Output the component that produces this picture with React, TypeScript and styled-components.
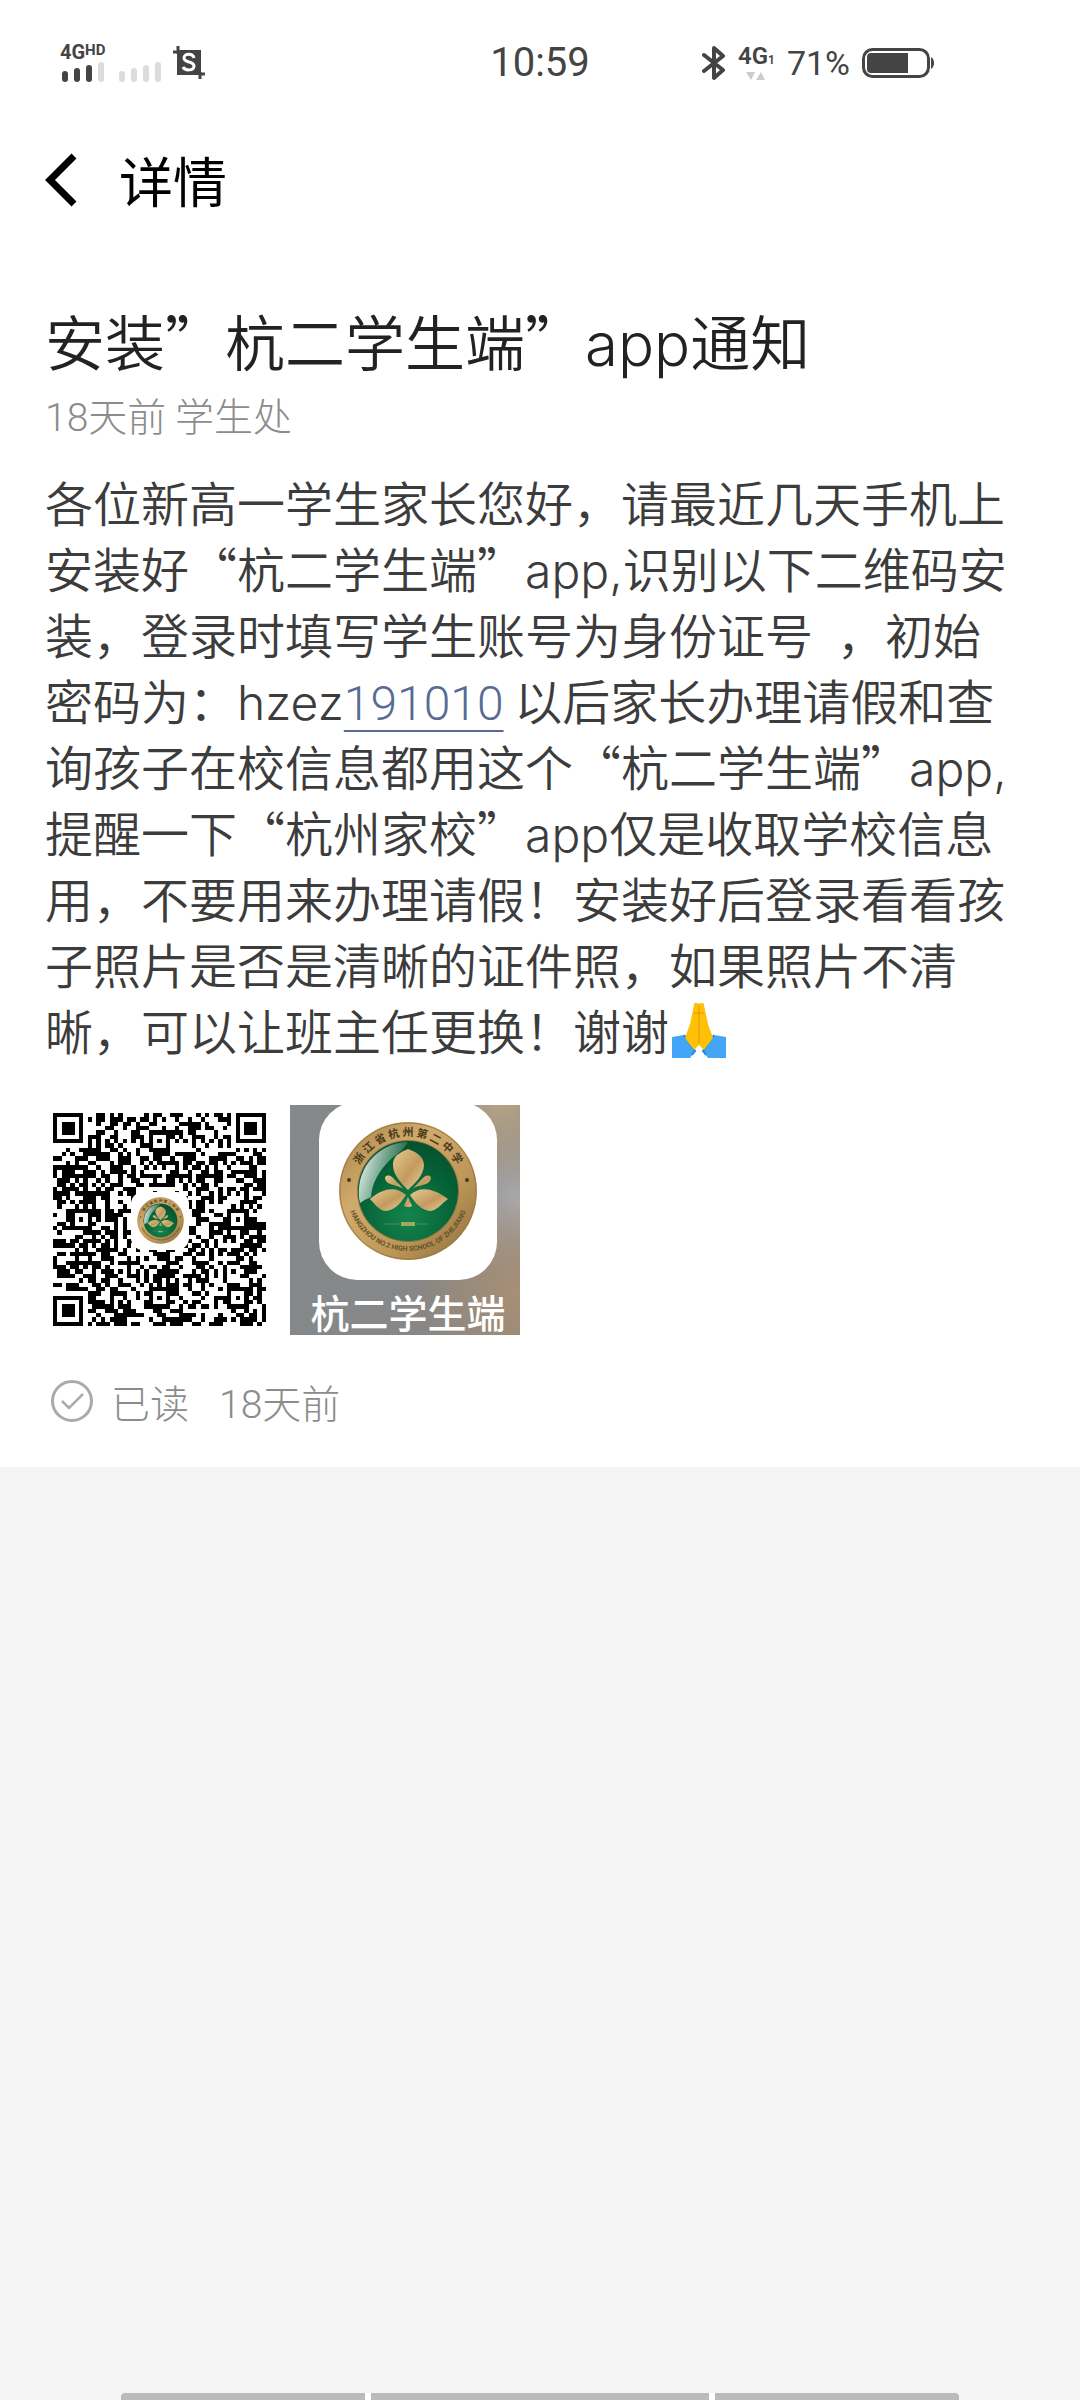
import React from 'react';
import styled, { createGlobalStyle } from 'styled-components';

const cjk = '"Noto Sans CJK SC", "Noto Sans", sans-serif';
const latin = 'Roboto, "Noto Sans", sans-serif';

const GlobalStyle = createGlobalStyle`
  * { box-sizing: border-box; }
  body { margin: 0; background: #f5f5f5; font-family: ${cjk}; }
  h1, h2, p { margin: 0; }
`;

const Page = styled.div`
  display: flex;
  flex-direction: column;
  min-height: 100vh;
`;

const Sheet = styled.div`
  background: #fff;
  padding-bottom: 36px;
`;

const StatusBar = styled.div`
  display: grid;
  grid-template-columns: 1fr auto 1fr;
  align-items: center;
  height: 126px;
  padding: 0 146px 0 60px;
  color: #444;
  font-family: ${latin};
`;

const StatusGroup = styled.div<{ $end?: boolean }>`
  display: flex;
  align-items: center;
  gap: 12px;
  justify-content: ${(p) => (p.$end ? 'flex-end' : 'flex-start')};
`;

const Carrier = styled.div`
  display: flex;
  flex-direction: column;
  gap: 2px;
`;

const CarrierName = styled.div`
  display: flex;
  align-items: flex-start;
  font-size: 20px;
  line-height: 16px;
  font-weight: 700;
`;

const Small = styled.span`
  font-size: 15px;
  line-height: 12px;
`;

const Bars = styled.div`
  display: flex;
  align-items: flex-end;
  gap: 6px;
  height: 20px;
  padding-left: 2px;
`;

const Bar = styled.i<{ $h: number; $on?: boolean }>`
  width: 6px;
  height: ${(p) => p.$h}px;
  border-radius: 3px;
  background: ${(p) => (p.$on ? '#444' : '#dcdcdc')};
`;

const SecondSim = styled.div`
  align-self: flex-end;
`;

const Clock = styled.time`
  font-size: 40px;
  line-height: 48px;
  padding-left: 86px;
`;

const Network = styled.div`
  display: flex;
  flex-direction: column;
  align-items: center;
  font-size: 24px;
  line-height: 22px;
  font-weight: 600;
`;

const Tiny = styled.span`
  font-size: 12px;
`;

const Percent = styled.span`
  font-size: 34px;
  line-height: 40px;
`;

const Header = styled.header`
  display: flex;
  align-items: center;
  gap: 42px;
  height: 108px;
  padding: 0 45px;
`;

const BackButton = styled.button`
  display: flex;
  padding: 0;
  border: 0;
  background: none;
  color: #000;
`;

const HeaderTitle = styled.h1`
  font-size: 54px;
  line-height: 72px;
  font-weight: 400;
  color: #000;
`;

const Notice = styled.article`
  padding: 64px 60px 0 45px;
`;

const Title = styled.h2`
  font-size: 60px;
  line-height: 84px;
  font-weight: 350;
  color: #222;
`;

const Meta = styled.p`
  padding-top: 2px;
  font-size: 39px;
  line-height: 60px;
  font-weight: 300;
  color: #8c8c8c;
`;

const Body = styled.p`
  padding-top: 24px;
  font-size: 48px;
  line-height: 66px;
  font-weight: 350;
  color: #3c3c3c;
`;

const Latin = styled.span`
  font-family: Inter, "Noto Sans", sans-serif;
  font-weight: 300;
  line-height: 1;
`;

const Digits = styled.span`
  font-family: ${latin};
  font-weight: 300;
  line-height: 1;
`;

const NumberLink = styled.a`
  font-family: ${latin};
  font-weight: 300;
  line-height: 1;
  color: #576b95;
  text-decoration: underline;
  text-decoration-thickness: 2px;
  text-underline-offset: 10px;
`;

const Pray = styled.svg`
  width: 54px;
  height: 56px;
  margin-left: 3px;
  vertical-align: -8px;
`;

const Attachments = styled.div`
  display: flex;
  gap: 15px;
  padding-top: 43px;
`;

const Attachment = styled.button`
  display: flex;
  flex-direction: column;
  align-items: center;
  width: 230px;
  height: 230px;
  padding: 0;
  border: 0;
  background: #fff;
  overflow: hidden;
`;

const AppShot = styled(Attachment)`
  justify-content: flex-start;
  padding-left: 6px;
  background:
    radial-gradient(circle at 100% 82%, #a88f74 0, rgba(168, 143, 116, 0) 34%),
    radial-gradient(circle at 92% 0, #b5a285 0, rgba(181, 162, 133, 0) 26%),
    radial-gradient(circle at 100% 42%, #a9a9ad 0, rgba(169, 169, 173, 0) 30%),
    linear-gradient(100deg, #86898a 0%, #858789 45%, #8d8780 100%);
`;

const AppTile = styled.span`
  display: flex;
  align-items: center;
  justify-content: center;
  flex: none;
  width: 178px;
  height: 178px;
  margin-top: -3px;
  border-radius: 38px;
  background: #fff;
`;

const AppLabel = styled.span`
  flex: none;
  padding-top: 7px;
  font-family: ${cjk};
  font-size: 39px;
  line-height: 48px;
  font-weight: 500;
  color: #fff;
`;

const ReadRow = styled.div`
  display: flex;
  align-items: center;
  gap: 18px;
  padding: 36px 0 0 6px;
  font-size: 39px;
  line-height: 60px;
  font-weight: 300;
  color: #8c8c8c;
`;

const ReadTime = styled.time`
  padding-left: 12px;
`;

const NavHandles = styled.nav`
  display: grid;
  grid-template-columns: 244fr 338fr 244fr;
  gap: 6px;
  margin: auto 121px 0;
  height: 7px;
  border-radius: 4px 4px 0 0;
  overflow: hidden;
  background: #fff;
`;

const Handle = styled.span`
  background: #bababa;
`;

const SIZE = 49;

function finder(x: number, y: number, ox: number, oy: number): boolean | null {
  const dx = x - ox;
  const dy = y - oy;
  if (dx < -1 || dy < -1 || dx > 7 || dy > 7) return null;
  const r = Math.max(Math.abs(dx - 3), Math.abs(dy - 3));
  return r === 3 || r <= 1;
}

function moduleOn(x: number, y: number, noise: () => number): boolean {
  const value = noise() > 0.49;
  for (const [ox, oy] of [[0, 0], [SIZE - 7, 0], [0, SIZE - 7]]) {
    const hit = finder(x, y, ox, oy);
    if (hit !== null) return hit;
  }
  for (const [cx, cy] of [[24, 6], [6, 24], [24, 42], [42, 24], [42, 42]]) {
    const r = Math.max(Math.abs(x - cx), Math.abs(y - cy));
    if (r <= 2) return r !== 1;
  }
  if (x === 6) return y % 2 === 0;
  if (y === 6) return x % 2 === 0;
  return value;
}

function qrPath(): string {
  let seed = 191010;
  const noise = () => {
    seed = (seed * 1103515245 + 12345) % 2147483648;
    return seed / 2147483648;
  };
  let d = '';
  for (let y = 0; y < SIZE; y++) {
    for (let x = 0; x < SIZE; x++) {
      if (moduleOn(x, y, noise)) d += `M${x} ${y}h1v1h-1z`;
    }
  }
  return d;
}

const QR = qrPath();

function Emblem({ id, x, y, size }: { id: string; x?: number; y?: number; size: number }) {
  return (
    <svg x={x} y={y} width={size} height={size} viewBox="-70 -70 140 140" aria-hidden="true">
      <defs>
        <linearGradient id={`${id}-gold`} x1="0" y1="0" x2="1" y2="1">
          <stop offset="0" stopColor="#a88348" />
          <stop offset="0.35" stopColor="#d0ab6c" />
          <stop offset="0.65" stopColor="#bd9858" />
          <stop offset="1" stopColor="#8b6c3c" />
        </linearGradient>
        <radialGradient id={`${id}-green`} cx="0.5" cy="0.75" r="0.75">
          <stop offset="0" stopColor="#14854c" />
          <stop offset="0.6" stopColor="#066438" />
          <stop offset="1" stopColor="#05512f" />
        </radialGradient>
        <linearGradient id={`${id}-shine`} x1="0" y1="0.3" x2="1" y2="0.7">
          <stop offset="0" stopColor="#fff" stopOpacity="0.95" />
          <stop offset="0.8" stopColor="#cfe6da" stopOpacity="0.15" />
        </linearGradient>
        <linearGradient id={`${id}-petal`} x1="0" y1="0" x2="1" y2="1">
          <stop offset="0" stopColor="#e6cb92" />
          <stop offset="0.55" stopColor="#c39a5e" />
          <stop offset="1" stopColor="#ead39b" />
        </linearGradient>
        <path id={`${id}-top`} d="M-55 0A55 55 0 0 1 55 0" />
        <path id={`${id}-bottom`} d="M-62 -2A62 62 0 1 0 62 -2" />
      </defs>
      <circle r="69" fill={`url(#${id}-gold)`} />
      <circle r="68" fill="none" stroke="#9c7a44" strokeWidth="1" />
      <circle r="51" fill="#8c7440" />
      <circle r="50" fill={`url(#${id}-green)`} />
      <path d="M-48 12A50 50 0 0 1 0 -49Q-4 -41 -16 -33Q-36 -14 -37 6Q-42 8 -48 12Z" fill={`url(#${id}-shine)`} />
      <g fill={`url(#${id}-petal)`}>
        <path d="M0 -1C-7 -8 -16 -17 -15 -28C-14 -36 -7 -39 0 -42C8 -39 16 -35 16 -25C15 -15 7 -8 0 -1Z" />
        <path d="M-2 4C-12 -5 -25 -3 -38 8C-33 13 -30 19 -22 20C-12 19 -7 11 -2 4Z" />
        <path d="M2 4C12 -5 25 -3 40 8C33 13 30 19 22 20C12 19 7 11 2 4Z" />
        <path d="M-3 0C-7 -6 -12 -4 -20 -8C-26 -13 -22 -18 -16 -14C-12 -10 -8 -6 -3 0Z" />
        <path d="M3 0C7 -6 12 -4 20 -8C26 -13 22 -18 16 -14C12 -10 8 -6 3 0Z" />
        <path d="M0 6L-4 15Q0 17 4 15Z" />
      </g>
      <path d="M-24 33H-9M9 33H20" stroke="#4a8f55" />
      <path d="M-7 33H7" stroke="#a5a860" strokeWidth="4" />
      <circle cx="-59" cy="-11" r="2" fill="#4a3a1c" />
      <circle cx="59" cy="-11" r="2" fill="#4a3a1c" />
      <text fontFamily={cjk} fontSize="11" fontWeight="700" fill="#4a3a1c" textAnchor="middle">
        <textPath href={`#${id}-top`} startOffset="50%">浙 江 省 杭 州 第 二 中 学</textPath>
      </text>
      <text fontFamily={latin} fontSize="7" fontWeight="700" fill="#65512a" textAnchor="middle">
        <textPath href={`#${id}-bottom`} startOffset="50%">HANGZHOU NO.2 HIGH SCHOOL OF ZHEJIANG</textPath>
      </text>
    </svg>
  );
}

export default function App() {
  return (
    <Page lang="zh-CN">
      <GlobalStyle />
      <Sheet>
        <StatusBar>
          <StatusGroup>
            <Carrier>
              <CarrierName>4G<Small>HD</Small></CarrierName>
              <Bars><Bar $h={11} $on /><Bar $h={14} $on /><Bar $h={17} $on /><Bar $h={20} /></Bars>
            </Carrier>
            <SecondSim>
              <Bars><Bar $h={11} /><Bar $h={14} /><Bar $h={17} /><Bar $h={20} /></Bars>
            </SecondSim>
            <svg width="34" height="34" viewBox="0 0 34 34" aria-hidden="true">
              <path d="M4 4H28V29H4Z" fill="#444" />
              <path d="M0 6H6M5 0V8M26 28H32M27 26V33" stroke="#444" strokeWidth="3" />
              <path d="M21 12C20 7 11 7 11 12C11 17 21 15 21 20C21 25 12 25 10 21" fill="none" stroke="#fff" strokeWidth="3" />
            </svg>
          </StatusGroup>
          <Clock>10:59</Clock>
          <StatusGroup $end>
            <svg width="24" height="36" viewBox="0 0 24 36" fill="none" stroke="#444" strokeWidth="4" strokeLinejoin="round" strokeLinecap="round" aria-hidden="true">
              <path d="M2 10L21 25L12 33V3L21 11L2 26" />
            </svg>
            <Network>
              <span>4G<Tiny>1</Tiny></span>
              <svg width="20" height="10" viewBox="0 0 20 10" fill="#ccc" aria-hidden="true">
                <path d="M0 1H9L5 9ZM10 9H19L15 1Z" />
              </svg>
            </Network>
            <Percent>71%</Percent>
            <svg width="72" height="30" viewBox="0 0 72 30" aria-hidden="true">
              <rect x="1.500" y="1.500" width="65" height="27" rx="9" fill="none" stroke="#444" strokeWidth="3" />
              <path d="M9 5H46V25H9Q5 25 5 21V9Q5 5 9 5Z" fill="#444" />
              <path d="M69 9Q72 11 72 15Q72 19 69 21Z" fill="#444" />
            </svg>
          </StatusGroup>
        </StatusBar>
        <Header>
          <BackButton type="button" aria-label="返回">
            <svg width="32" height="54" viewBox="0 0 32 54" fill="none" stroke="#000" strokeWidth="7" aria-hidden="true">
              <path d="M29 3L5 27L29 51" />
            </svg>
          </BackButton>
          <HeaderTitle>详情</HeaderTitle>
        </Header>
        <Notice>
          <Title>安装”杭二学生端”<Latin>app</Latin>通知</Title>
          <Meta><Digits>18</Digits>天前 学生处</Meta>
          <Body>
            各位新高一学生家长您好，请最近几天手机上安装好“杭二学生端”<Latin>app,</Latin>识别以下二维码安装，登录时填写学生账号为身份证号&ensp;，初始密码为：<Latin>hzez</Latin><NumberLink href="tel:191010">191010</NumberLink> 以后家长办理请假和查询孩子在校信息都用这个“杭二学生端”<Latin>app,</Latin>提醒一下“杭州家校”<Latin>app</Latin>仅是收取学校信息用，不要用来办理请假！安装好后登录看看孩子照片是否是清晰的证件照，如果照片不清晰，可以让班主任更换！谢谢<Pray viewBox="0 0 54 56" role="img" aria-label="🙏">
              <path d="M0 35L12 33L23 49L18 56H0Z" fill="#42a5f5" />
              <path d="M54 35L42 33L31 49L36 56H54Z" fill="#42a5f5" />
              <path d="M12 33L23 49L20 53M42 33L31 49L34 53" fill="none" stroke="#1e88e5" strokeWidth="2" />
              <path d="M22 3Q22 0 25 1Q27 2 29 1Q32 0 32 3L36 22L41 36L32 48L27 43L22 48L13 36L18 22Z" fill="#ffc107" />
              <path d="M27 3V41M22 11H32" stroke="#e59600" strokeWidth="1" />
            </Pray>
          </Body>
          <Attachments>
            <Attachment type="button" aria-label="二维码">
              <svg width="230" height="230" viewBox="0 0 230 230" aria-hidden="true">
                <svg x="8" y="8" width="213" height="213" viewBox="0 0 49 49" shapeRendering="crispEdges"><path d={QR} /></svg>
                <rect x="86" y="87" width="58" height="58" rx="12" fill="#fff" />
                <Emblem id="mini" x={92} y={92} size={47} />
              </svg>
            </Attachment>
            <AppShot type="button">
              <AppTile><Emblem id="large" size={140} /></AppTile>
              <AppLabel>杭二学生端</AppLabel>
            </AppShot>
          </Attachments>
          <ReadRow>
            <svg width="42" height="42" viewBox="0 0 42 42" fill="none" stroke="#aaa" aria-hidden="true">
              <circle cx="21" cy="21" r="19.500" strokeWidth="3" />
              <path d="M11 21L18 28L32 14" strokeWidth="2.500" />
            </svg>
            <span>已读</span>
            <ReadTime><Digits>18</Digits>天前</ReadTime>
          </ReadRow>
        </Notice>
      </Sheet>
      <NavHandles aria-label="系统导航"><Handle /><Handle /><Handle /></NavHandles>
    </Page>
  );
}
